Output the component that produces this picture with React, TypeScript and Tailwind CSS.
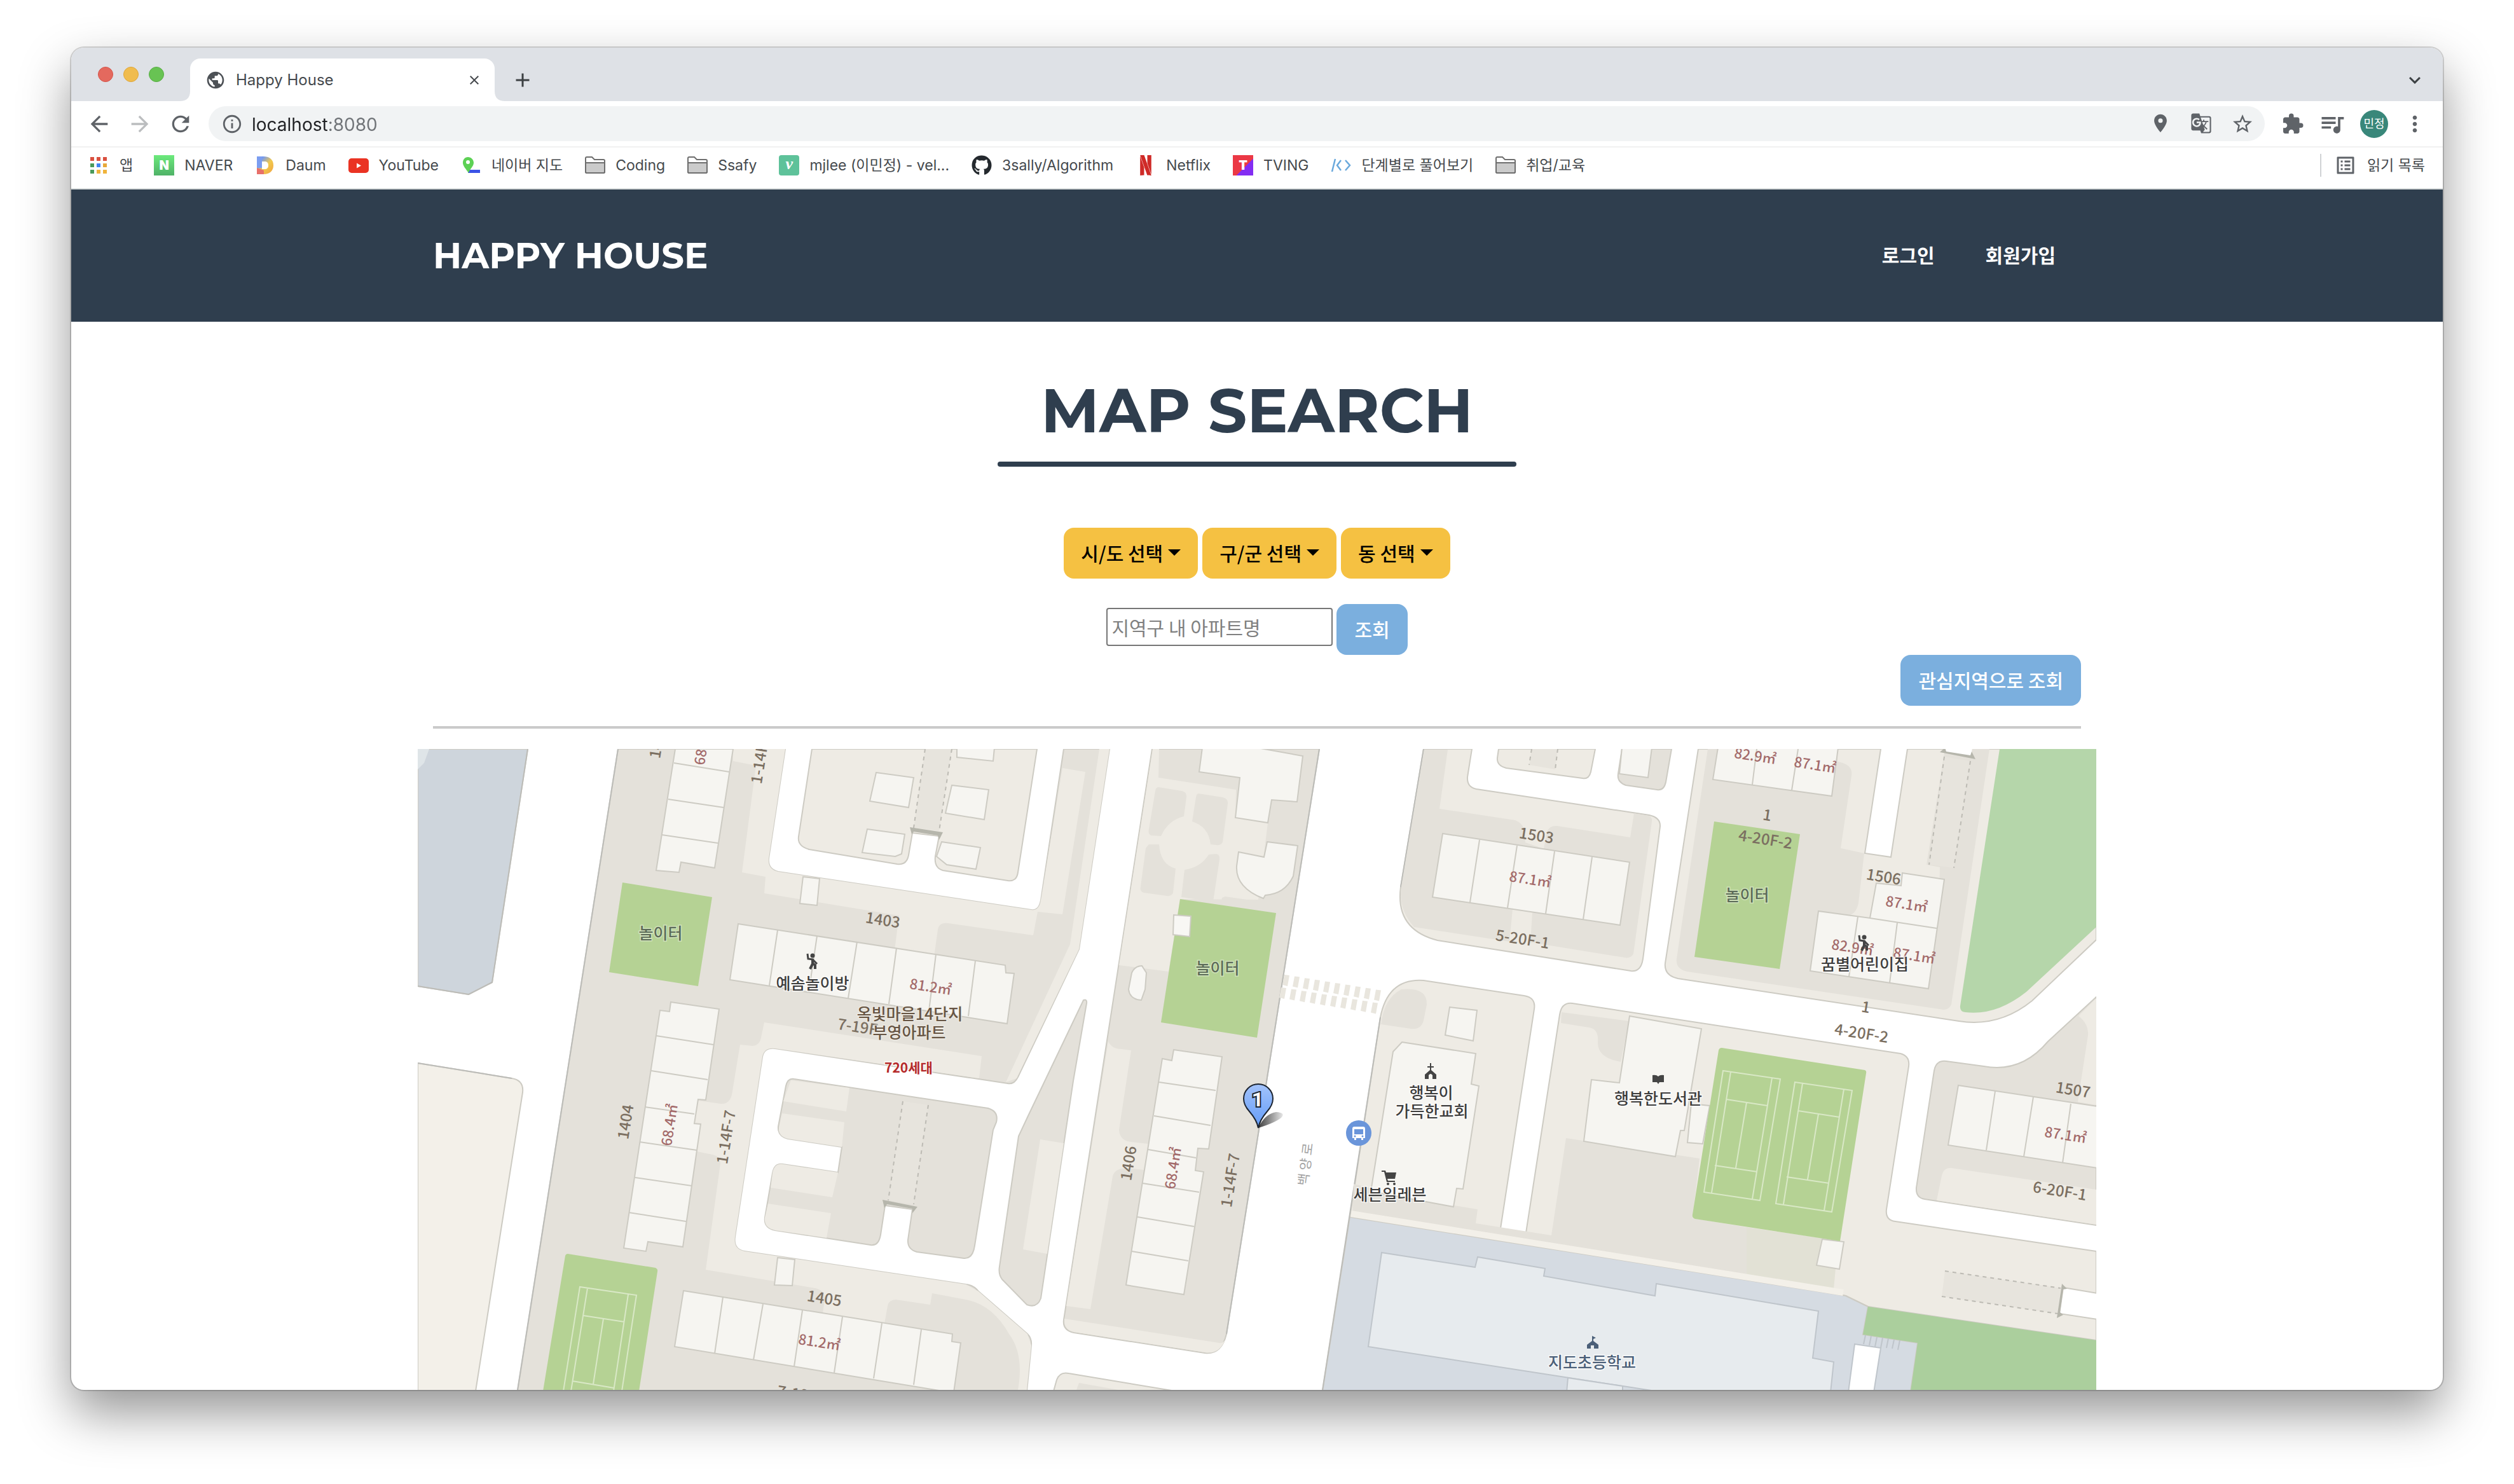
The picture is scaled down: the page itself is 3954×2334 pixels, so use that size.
import React from "react";
import {
  MdAdd,
  MdArrowBack,
  MdArrowForward,
  MdClose,
  MdExtension,
  MdGTranslate,
  MdInfoOutline,
  MdKeyboardArrowDown,
  MdListAlt,
  MdLocationOn,
  MdMoreVert,
  MdPublic,
  MdQueueMusic,
  MdRefresh,
  MdStarBorder,
} from "react-icons/md";
import { FaGithub } from "react-icons/fa";
import { SiNetflix } from "react-icons/si";

const UI = "font-['Inter','Noto_Sans_CJK_KR',sans-serif]";
const KR = "font-['Noto_Sans_CJK_KR',sans-serif]";
const BRAND = "font-['Montserrat','Inter','Noto_Sans_CJK_KR',sans-serif]";

/* ---------- bookmark icons ---------- */

function AppsIcon() {
  const colors = ["#d9503f", "#d9503f", "#d9503f", "#4a9a5b", "#4285f4", "#e8a93a", "#4a9a5b", "#f0b43c", "#f0b43c"];
  return (
    <svg viewBox="0 0 26 26" className="size-[26px]" aria-hidden="true">
      {colors.map((c, i) => (
        <rect key={i} x={(i % 3) * 10} y={Math.floor(i / 3) * 10} width="6" height="6" fill={c} />
      ))}
    </svg>
  );
}

function NaverIcon() {
  return (
    <span aria-hidden="true" className="flex size-8 items-center justify-center bg-linear-to-b from-[#6cea7c] to-[#4fb267] text-xl leading-none font-black text-white">
      N
    </span>
  );
}

function DaumIcon() {
  return (
    <svg viewBox="0 0 32 32" className="size-8" aria-hidden="true">
      <defs>
        <linearGradient id="daum" x1="0" y1="0" x2="1" y2="1">
          <stop offset="0.2" stopColor="#7399f2" />
          <stop offset="0.55" stopColor="#f2c94c" />
          <stop offset="1" stopColor="#f0a040" />
        </linearGradient>
      </defs>
      <path d="M3 2H13C24 2 29 8 29 16S24 30 13 30H3Z" fill="url(#daum)" />
      <path d="M3 20L14 24V30H3Z" fill="#e8706a" />
      <path d="M3 2H11V20H3Z" fill="#7b9df0" />
      <path d="M11 10H15C19 10 21 12 21 16S19 22 15 22H11Z" fill="#fff" />
    </svg>
  );
}

function YoutubeIcon() {
  return (
    <svg viewBox="0 0 32 32" className="size-8" aria-hidden="true">
      <rect y="5" width="32" height="23" rx="5" fill="#ea3323" />
      <path d="M13 12.5L20 16.5L13 20.5Z" fill="#fff" />
    </svg>
  );
}

function NaverMapIcon() {
  return (
    <svg viewBox="0 0 32 32" className="size-8" aria-hidden="true">
      <path d="M11 23H30V28H11Z" fill="#3b53e6" />
      <path d="M11 3C16 3 20 7 20 12C20 18 14 21 12 28C8 22 3 17 3 12C3 7 6 3 11 3Z" fill="#5dd155" />
      <circle cx="11" cy="11" r="3" fill="#fff" />
    </svg>
  );
}

function FolderIcon() {
  return (
    <svg viewBox="0 0 32 32" className="size-8" fill="#fff" stroke="#6e6e6e" strokeWidth="2" aria-hidden="true">
      <path d="M1 26V5Q1 3 3 3H11L15 7H29Q31 7 31 9V26Q31 28 29 28H3Q1 28 1 26Z" />
      <path d="M1 12H31V26Q31 28 29 28H3Q1 28 1 26Z" fill="#cbcbcb" />
    </svg>
  );
}

function VelogIcon() {
  return (
    <span aria-hidden="true" className="flex size-8 items-center justify-center rounded bg-[#5ec29a] pb-1 font-['Liberation_Serif',serif] text-[26px] leading-none font-bold text-white italic">
      v
    </span>
  );
}

function NetflixIcon() {
  return <SiNetflix className="size-8 text-[#cf2a27]" aria-hidden="true" />;
}

function TvingIcon() {
  return (
    <span aria-hidden="true" className="flex size-8 items-center justify-center bg-[linear-gradient(135deg,#eb3845_58%,#832df2_58%)] text-xl leading-none font-black text-white">
      T
    </span>
  );
}

function CodeIcon() {
  return (
    <svg viewBox="0 0 32 32" className="size-8" fill="none" stroke="#6aa9dc" strokeWidth="2.5" aria-hidden="true">
      <path d="M7 6L2 26M16 8L10 16L16 24M23 8L30 16L23 24" />
    </svg>
  );
}

const bookmarks: { label: string; icon: React.ReactNode }[] = [
  { label: "NAVER", icon: <NaverIcon /> },
  { label: "Daum", icon: <DaumIcon /> },
  { label: "YouTube", icon: <YoutubeIcon /> },
  { label: "네이버 지도", icon: <NaverMapIcon /> },
  { label: "Coding", icon: <FolderIcon /> },
  { label: "Ssafy", icon: <FolderIcon /> },
  { label: "mjlee (이민정) - vel...", icon: <VelogIcon /> },
  { label: "3sally/Algorithm", icon: <FaGithub className="size-8 text-[#24292e]" /> },
  { label: "Netflix", icon: <NetflixIcon /> },
  { label: "TVING", icon: <TvingIcon /> },
  { label: "단계별로 풀어보기", icon: <CodeIcon /> },
  { label: "취업/교육", icon: <FolderIcon /> },
];

/* ---------- browser chrome ---------- */

function TabStrip() {
  return (
    <div className="flex h-[84px] items-end bg-[#dee1e6]">
      <div className="flex gap-4 self-center pr-[41px] pl-[42px]">
        <button aria-label="창 닫기" className="size-6 rounded-full border border-[#d5544a] bg-[#e4695e]" />
        <button aria-label="최소화" className="size-6 rounded-full border border-[#dea63a] bg-[#f0bc4e]" />
        <button aria-label="전체 화면" className="size-6 rounded-full border border-[#57ad43] bg-[#68c353]" />
      </div>
      <div className="relative flex h-[67px] w-[479px] items-center rounded-t-2xl bg-white pr-5 pl-6 text-[#45494d]">
        <svg viewBox="0 0 16 16" className="absolute bottom-0 -left-4 size-4" aria-hidden="true">
          <path d="M16 0V16H0Q16 16 16 0Z" fill="#fff" />
        </svg>
        <svg viewBox="0 0 16 16" className="absolute -right-4 bottom-0 size-4" aria-hidden="true">
          <path d="M0 0V16H16Q0 16 0 0Z" fill="#fff" />
        </svg>
        <MdPublic className="size-8 text-[#4d5156]" />
        <span className="ml-4 flex-1 text-2xl">Happy House</span>
        <button aria-label="탭 닫기">
          <MdClose className="size-6" />
        </button>
      </div>
      <button aria-label="새 탭" className="ml-[26px] flex h-[67px] items-center text-[#3c4043]">
        <MdAdd className="size-9" />
      </button>
      <button aria-label="탭 검색" className="mr-[26px] ml-auto flex h-[67px] items-center text-[#3c4043]">
        <MdKeyboardArrowDown className="size-9" />
      </button>
    </div>
  );
}

function Toolbar() {
  return (
    <div className="flex h-[73px] items-center border-b-2 border-[#f1f1f1] bg-white pr-6 pl-6 text-[#5f6368]">
      <div className="flex gap-6 pr-6">
        <button aria-label="뒤로">
          <MdArrowBack className="size-10" />
        </button>
        <button aria-label="앞으로" className="text-[#bbbdbf]">
          <MdArrowForward className="size-10" />
        </button>
        <button aria-label="새로고침">
          <MdRefresh className="size-10" />
        </button>
      </div>
      <div className="flex h-[55px] flex-1 items-center rounded-full bg-[#f1f3f4] pr-[17px] pl-5">
        <MdInfoOutline className="size-[34px]" />
        <input
          aria-label="주소"
          defaultValue="localhost:8080"
          className="ml-[14px] flex-1 bg-[linear-gradient(90deg,#202124_121px,#6f7377_121px)] bg-clip-text pt-0.5 text-[28px] text-transparent outline-none"
        />
        <div className="flex gap-[30px]">
          <MdLocationOn className="size-[34px]" />
          <MdGTranslate className="size-[34px]" />
          <MdStarBorder className="size-9" />
        </div>
      </div>
      <div className="ml-[26px] flex items-center gap-[22px]">
        <MdExtension className="size-9" />
        <MdQueueMusic className="size-11" />
        <button aria-label="프로필" className="flex size-11 items-center justify-center rounded-full bg-[#39877a] text-lg text-white">
          민정
        </button>
        <MdMoreVert className="size-10" />
      </div>
    </div>
  );
}

function BookmarkBar() {
  return (
    <nav aria-label="북마크" className="flex h-[66px] items-center border-b-2 border-[#d8dcdc] bg-white pr-7 pb-2 pl-[30px] text-[23px] whitespace-nowrap text-[#45494d]">
      <a href="#apps" className="mr-[33px] flex items-center gap-5">
        <AppsIcon />
        앱
      </a>
      <div className="flex gap-[35px]">
        {bookmarks.map((b) => (
          <a key={b.label} href="#bookmark" className="flex items-center gap-4">
            {b.icon}
            {b.label}
          </a>
        ))}
      </div>
      <a href="#reading" className="ml-auto flex items-center gap-4 border-l-2 border-[#d0d2d5] pl-5 leading-8">
        <MdListAlt className="size-9 text-[#5f6368]" />
        읽기 목록
      </a>
    </nav>
  );
}

/* ---------- map ---------- */

const LIGHT = "#eeebe4";
const DARK = "#e4e1da";
const EDGE = "#cdcbc3";

const landBlocks: { d: string; fill: string }[] = [
  { d: "M658 1178H831L775 1545L738 1564L658 1551Z", fill: "#ced5dc" },
  { d: "M658 1672L806 1696Q825 1699 823 1718L749 2188H658Z", fill: "#f3f0e9" },
  {
    d: "M973 1178H1236L1210 1350Q1208 1367 1225 1371L1623 1431Q1635 1433 1638 1416L1674 1178H1746L1698 1493L1602 1694Q1596 1706 1586 1704L1220 1649Q1203 1647 1200 1662L1157 1945Q1154 1965 1172 1968L1520 2020Q1532 2021 1540 2031L1617 2098Q1624 2105 1623 2116L1616 2188H815Z",
    fill: DARK,
  },
  {
    d: "M1278 1178H1632L1602 1372Q1600 1387 1586 1385L1484 1369Q1470 1365 1472 1347L1478 1315L1436 1310L1430 1345Q1427 1361 1412 1359L1274 1336Q1255 1331 1257 1316Z",
    fill: LIGHT,
  },
  {
    d: "M1250 1697L1555 1743Q1572 1748 1568 1765L1563 1777L1534 1959Q1531 1980 1517 1979L1443 1969Q1428 1965 1429 1950L1436 1902L1393 1896L1386 1942Q1383 1960 1370 1958L1220 1935Q1202 1931 1204 1915L1216 1845Q1219 1829 1232 1831L1319 1844L1325 1804L1240 1791Q1224 1787 1225 1772L1237 1708Q1240 1695 1250 1697Z",
    fill: DARK,
  },
  { d: "M1705 1573Q1711 1571 1710 1578L1689 1700L1638 2042Q1632 2058 1616 2052L1577 2012Q1571 2004 1573 1992L1603 1787L1618 1755Z", fill: DARK },
  { d: "M1813 1178H2076L1930 2098Q1922 2131 1896 2128L1690 2096Q1672 2092 1674 2076Z", fill: DARK },
  { d: "M1658 2188L1663 2170Q1668 2157 1682 2160L1850 2188Z", fill: LIGHT },
  {
    d: "M2240 1178H2316L2309 1222Q2308 1238 2323 1241L2595 1282Q2613 1286 2612 1300L2585 1508Q2582 1529 2566 1527L2262 1479Q2195 1462 2204 1395Z",
    fill: LIGHT,
  },
  { d: "M2358 1178H2510L2503 1214Q2500 1226 2490 1224L2370 1208Q2355 1204 2356 1192Z", fill: LIGHT },
  { d: "M2552 1178H2630L2621 1230Q2618 1244 2607 1242L2558 1235Q2544 1230 2546 1217Z", fill: DARK },
  {
    d: "M2672 1178H2959L2934 1342L2975 1348L3001 1178H3298V1478L3197 1574Q3145 1616 3082 1606L2640 1539Q2618 1534 2620 1515Z",
    fill: LIGHT,
  },
  {
    d: "M2124 1914L2172 1600Q2184 1538 2240 1542L2398 1566Q2417 1569 2414 1587L2361 1932L2401 1939L2454 1596Q2457 1576 2474 1578L2990 1657Q3005 1661 3003 1677L2968 1902Q2966 1919 2982 1921L3298 1968V2108L2939 2055L2904 2038Z",
    fill: LIGHT,
  },
  { d: "M3298 1568L3222 1638Q3180 1688 3121 1677L3062 1669Q3046 1667 3043 1684L3015 1868Q3014 1884 3028 1886L3298 1927Z", fill: DARK },
  { d: "M2124 1914L2904 2038L2939 2055L2931 2099L3017 2112L3006 2188H2081Z", fill: "#d5dbe2" },
];

const lightPatches = [
  "M1153 1178H1236L1210 1350Q1208 1367 1225 1371L1623 1431Q1635 1433 1638 1416L1672 1208L1708 1214L1672 1438L1633 1434L1626 1471L1492 1452Q1478 1450 1476 1462L1470 1505L1408 1495L1415 1440L1203 1405L1205 1379L1168 1372L1190 1204L1154 1197Z",
  "M1730 1178H1746L1698 1493L1600 1696L1583 1702L1684 1485Z",
  "M1203 1608L1545 1661L1541 1696L1220 1649Q1203 1647 1200 1662L1157 1945Q1154 1965 1172 1968L1520 2020L1540 2031L1617 2098L1623 2116L1616 2186H1602Q1612 2130 1588 2098Q1562 2052 1520 2044L1467 2034L1464 2052L1410 2044Q1399 2044 1397 2054L1392 2082L1295 2066L1298 2044Q1300 2030 1283 2026L1111 1997L1134 1830Q1133 1818 1122 1816L1097 1811L1103 1768L1093 1767L1099 1731L1135 1736Q1148 1737 1152 1722L1165 1643L1185 1645Q1196 1644 1198 1632Z",
  "M1245 1699L1337 1711L1332 1748L1233 1732Z",
  "M1231 1751L1329 1765L1325 1804L1240 1791Q1225 1787 1226 1775Z",
  "M1213 1868L1310 1883L1319 1844L1232 1831Q1219 1829 1216 1845Z",
  "M1209 1893L1308 1908L1301 1947L1220 1935Q1202 1931 1204 1915Z",
  "M1637 1792L1674 1798L1648 1972L1610 1965Z",
  "M1814 1178H1824L1823 1223L1945 1242L1944 1286L1995 1294L1980 1415L1857 1414L1839 1528L1761 1518Z",
  "M1744 1638Q1750 1650 1765 1650L1780 1652L1761 1777Q1762 1794 1780 1796L1807 1799L1800 1840L1775 1837Q1754 1837 1751 1850L1716 2059L1678 2054Z",
  "M1675 2074L1918 2112Q1926 2114 1929 2104Q1920 2131 1896 2127L1690 2095Q1674 2092 1675 2074Z",
  "M3055 1849Q3058 1836 3070 1837L3298 1871V1926L3047 1888Z",
  "M3298 1570L3270 1598Q3286 1610 3285 1628L3269 1733L3298 1738Z",
];

const darkPatches = [
  "M2241 1179H2278L2265 1272L2384 1290Q2402 1296 2400 1325L2429 1335L2434 1308Q2438 1298 2450 1299L2565 1317L2571 1279L2594 1283Q2600 1285 2599 1292L2570 1500Q2566 1508 2556 1506L2408 1482L2411 1435L2380 1430L2375 1481L2225 1458Q2200 1430 2205 1395Z",
  "M2687 1178H2891V1198Q2916 1202 2913 1220L2896 1334L2933 1342L2924 1420Q2920 1440 2905 1440L2950 1450L3050 1440L3052 1364L3031 1360L3060 1178H3130L3070 1580Q3066 1588 3058 1588L2654 1528Q2636 1524 2638 1508Z",
  "M2205 1556Q2246 1552 2245 1580L2240 1605Q2236 1620 2220 1618L2173 1611Q2178 1570 2205 1556Z",
  "M2130 1862L2229 1886L2325 1902L2322 1924L2441 1943L2464 1790L2674 1822L2663 1916L2748 1930V2008L2128 1908Z",
  "M2457 1592L2563 1606L2550 1670Q2514 1664 2514 1640Q2516 1618 2500 1616L2456 1609Z",
  "M1823 1238L1860 1244Q1868 1246 1867 1254L1863 1284Q1838 1290 1827 1315L1812 1314Q1806 1312 1808 1304L1818 1244Q1819 1238 1823 1238Z",
  "M1886 1248L1924 1254Q1933 1256 1932 1264L1924 1324Q1922 1330 1914 1329L1905 1328Q1902 1300 1876 1292L1882 1254Q1883 1248 1886 1248Z",
  "M1808 1328H1824Q1826 1360 1850 1366L1846 1404Q1844 1410 1836 1409L1800 1404Q1793 1402 1795 1394L1803 1334Z",
  "M1902 1344L1914 1343Q1920 1344 1919 1352L1909 1418L1859 1411L1864 1368Q1890 1364 1902 1344Z",
  "M1923 1412L1928 1410L1976 1417L1990 1414L2036 1390L2010 1440L1920 1424Z",
];

const buildings = [
  "M1063 1178H1154L1125 1365L1072 1356L1069 1372L1033 1369Z",
  "M1264 1379L1290 1382L1286 1424L1259 1421Z",
  "M1162 1453L1582 1518L1583 1530L1596 1531L1585 1610L1149 1541Z",
  "M1056 1576L1132 1587L1111 1730L1099 1729L1093 1767L1103 1768L1075 1961L1020 1953L1017 1968L982 1963L1039 1589L1054 1591Z",
  "M1224 1978L1251 1981L1247 2022L1219 2021Z",
  "M1076 2030L1499 2098L1498 2110L1512 2112L1501 2190L1484 2188L1062 2118Z",
  "M1379 1215L1438 1223L1430 1270L1369 1260Z",
  "M1365 1304L1424 1312L1419 1343L1409 1347L1357 1341Z",
  "M1498 1235L1556 1242L1549 1289L1488 1279Z",
  "M1482 1324L1543 1333L1536 1367L1490 1360L1474 1347Z",
  "M1506 1176H1565L1563 1197L1506 1191Z",
  "M1892 1176H1978L2050 1189L2041 1261L2001 1258L1995 1294L1944 1286L1951 1223L1887 1214Z",
  "M1994 1324L2042 1330L2035 1378Q2022 1406 1991 1408L1988 1413Q1944 1396 1946 1362L1949 1340L1989 1348Z",
  "M1847 1651L1923 1662L1902 1807L1885 1806L1881 1841L1894 1843L1863 2036L1772 2021L1829 1665L1844 1668Z",
  "M2270 1311L2564 1356L2549 1455L2254 1411Z",
  "M2552 1176H2599L2593 1223L2548 1217Z",
  "M2703 1176H2892L2882 1252L2695 1226Z",
  "M2993 1373L3059 1383L3034 1555L2848 1527L2861 1433L2942 1444L2952 1389L2991 1393Z",
  "M2281 1584L2324 1589L2318 1637L2274 1628Z",
  "M2206 1639L2322 1657L2315 1705L2327 1708L2302 1870L2292 1869L2287 1898L2157 1874L2192 1654Z",
  "M2564 1598L2677 1618L2650 1778H2644L2636 1819L2492 1795L2504 1698L2548 1703Z",
  "M2661 1736L2690 1739L2679 1799L2655 1797Z",
  "M2867 1949L2901 1953L2894 1996L2858 1990Z",
  "M3081 1707L3300 1740V1837L3065 1801Z",
];

const unitLines =
  "M1061 1200L1148 1214M1052 1257L1139 1270M1042 1313L1130 1326" +
  "M1224 1463L1211 1550M1286 1472L1273 1560M1349 1481L1335 1570M1411 1491L1399 1579M1473 1501L1462 1590M1535 1511L1524 1598" +
  "M1033 1629L1123 1643M1025 1684L1114 1698M1016 1741L1093 1752M1007 1796L1097 1809M1000 1852L1089 1865M990 1907L1080 1921" +
  "M1138 2040L1125 2129M1201 2051L1186 2139M1263 2061L1250 2149M1326 2071L1313 2159M1388 2081L1375 2168M1450 2091L1438 2178" +
  "M1824 1702L1913 1715M1816 1755L1905 1770M1807 1808L1882 1821M1798 1861L1887 1875M1790 1914L1879 1929M1781 1968L1870 1983" +
  "M2328 1321L2313 1419M2387 1330L2372 1428M2446 1339L2432 1437M2505 1348L2491 1446" +
  "M2764 1178L2757 1234M2829 1178L2819 1243M2923 1442L2909 1536M2985 1451L2973 1546M2942 1444L3047 1460" +
  "M3139 1716L3125 1809M3199 1725L3184 1819M3258 1736L3245 1829";

const greens: { d: string; fill: string }[] = [
  { d: "M980 1388L1121 1411L1099 1551L959 1529Z", fill: "#b5d294" },
  { d: "M894 1972L1032 1994Q1036 1996 1035 2000L1006 2188H855L890 1975Q891 1972 894 1972Z", fill: "#b5d294" },
  { d: "M1857 1414L2008 1436L1978 1632L1827 1608Z", fill: "#b5d294" },
  { d: "M2697 1292L2832 1312L2800 1524L2666 1505Z", fill: "#b5d294" },
  { d: "M2709 1648L2934 1683Q2937 1684 2936 1688L2895 1952L2667 1917Q2662 1916 2663 1910L2704 1652Q2705 1648 2709 1648Z", fill: "#b5d294" },
  { d: "M3146 1178H3298V1458L3188 1560Q3140 1598 3092 1592Q3083 1591 3084 1582Z", fill: "#b5d6aa" },
  { d: "M2939 2055L3298 2108V2188H3006L3017 2112L2931 2099Z", fill: "#abcf9d" },
];

const court =
  "M2711 1684L2801 1697L2769 1888L2681 1875ZM2723 1686L2693 1876M2788 1695L2757 1886M2716 1729L2781 1739M2748 1734L2731 1837M2698 1833L2765 1843";

type Label = { x: number; y: number; t: string; kind: keyof typeof labelStyles; r?: number };

const labelStyles = {
  block: "fill-[#7b6f61] text-[24px] font-medium",
  area: "fill-[#a36a6a] text-[22px] font-medium",
  park: "fill-[#5c6b58] stroke-[#dce9cc] text-[25px] font-medium",
  place: "fill-[#3d3d3d] stroke-white text-[25px] font-medium",
  estate: "fill-[#665443] stroke-[#f0ede7] text-[25px] font-medium",
  count: "fill-[#b52a2a] stroke-white text-[21px] font-bold",
  school: "fill-[#4b5f78] stroke-white text-[25px] font-medium",
  road: "fill-[#a3a3a3] text-[21px]",
};

const labels: Label[] = [
  { x: 1033, y: 1165, t: "1402", kind: "block", r: -81 },
  { x: 1104, y: 1170, t: "68.4㎡", kind: "area", r: -81 },
  { x: 1195, y: 1190, t: "1-14F-7", kind: "block", r: -81 },
  { x: 1040, y: 1466, t: "놀이터", kind: "park" },
  { x: 1390, y: 1445, t: "1403", kind: "block", r: 9 },
  { x: 1465, y: 1550, t: "81.2㎡", kind: "area", r: 9 },
  { x: 1279, y: 1545, t: "예솜놀이방", kind: "place" },
  { x: 1350, y: 1613, t: "7-19F", kind: "block", r: 9 },
  { x: 1432, y: 1593, t: "옥빛마을14단지", kind: "estate" },
  { x: 1431, y: 1622, t: "부영아파트", kind: "estate" },
  { x: 1430, y: 1678, t: "720세대", kind: "count" },
  { x: 983, y: 1764, t: "1404", kind: "block", r: -81 },
  { x: 1052, y: 1769, t: "68.4㎡", kind: "area", r: -81 },
  { x: 1141, y: 1788, t: "1-14F-7", kind: "block", r: -81 },
  { x: 1298, y: 2040, t: "1405", kind: "block", r: 9 },
  { x: 1290, y: 2109, t: "81.2㎡", kind: "area", r: 9 },
  { x: 1266, y: 2192, t: "7-19F-1", kind: "block", r: 9 },
  { x: 1916, y: 1521, t: "놀이터", kind: "park" },
  { x: 1774, y: 1829, t: "1406", kind: "block", r: -81 },
  { x: 1844, y: 1837, t: "68.4㎡", kind: "area", r: -81 },
  { x: 1934, y: 1856, t: "1-14F-7", kind: "block", r: -81 },
  { x: 2053, y: 1831, t: "백 양 로", kind: "road", r: -83 },
  { x: 2252, y: 1717, t: "행복이", kind: "place" },
  { x: 2253, y: 1746, t: "가득한교회", kind: "place" },
  { x: 2187, y: 1877, t: "세븐일레븐", kind: "place" },
  { x: 2418, y: 1312, t: "1503", kind: "block", r: 9 },
  { x: 2408, y: 1381, t: "87.1㎡", kind: "area", r: 9 },
  { x: 2396, y: 1475, t: "5-20F-1", kind: "block", r: 9 },
  { x: 2762, y: 1187, t: "82.9㎡", kind: "area", r: 9 },
  { x: 2856, y: 1201, t: "87.1㎡", kind: "area", r: 9 },
  { x: 2781, y: 1280, t: "1", kind: "block", r: 9 },
  { x: 2778, y: 1318, t: "4-20F-2", kind: "block", r: 9 },
  { x: 2749, y: 1406, t: "놀이터", kind: "park" },
  { x: 2964, y: 1377, t: "1506", kind: "block", r: 9 },
  { x: 3000, y: 1420, t: "87.1㎡", kind: "area", r: 9 },
  { x: 2915, y: 1488, t: "82.9㎡", kind: "area", r: 9 },
  { x: 3012, y: 1501, t: "87.1㎡", kind: "area", r: 9 },
  { x: 2934, y: 1515, t: "꿈별어린이집", kind: "place" },
  { x: 2936, y: 1582, t: "1", kind: "block", r: 9 },
  { x: 2929, y: 1623, t: "4-20F-2", kind: "block", r: 9 },
  { x: 2609, y: 1726, t: "행복한도서관", kind: "place" },
  { x: 3262, y: 1712, t: "1507", kind: "block", r: 9 },
  { x: 3250, y: 1783, t: "87.1㎡", kind: "area", r: 9 },
  { x: 3241, y: 1871, t: "6-20F-1", kind: "block", r: 9 },
  { x: 2505, y: 2141, t: "지도초등학교", kind: "school" },
];

function Child({ x, y }: { x: number; y: number }) {
  return (
    <g transform={`translate(${x} ${y})`} fill="none" stroke="#444" strokeWidth="3">
      <circle cx="1" cy="-9" r="3.5" fill="#444" stroke="none" />
      <path d="M-7 -12L-6 -4L1 -3L8 4" />
      <path d="M1 -4V4L-3 12M1 3L5 6V12" strokeWidth="4" />
    </g>
  );
}

function MapCanvas() {
  return (
    <svg
      viewBox="658 1178 2640 1008"
      preserveAspectRatio="xMidYMin slice"
      role="img"
      aria-label="지도"
      className={`block h-full w-full ${KR}`}
    >
      <defs>
        <linearGradient id="pin" x1="0" y1="0" x2="0" y2="1">
          <stop offset="0" stopColor="#a3c3fb" />
          <stop offset="1" stopColor="#629bf7" />
        </linearGradient>
        <linearGradient id="pinShadow" x1="0" y1="0" x2="1" y2="0">
          <stop offset="0" stopColor="#000" stopOpacity="0.75" />
          <stop offset="1" stopColor="#000" stopOpacity="0.1" />
        </linearGradient>
      </defs>
      <rect x="658" y="1178" width="2640" height="1008" fill="#fff" />

      <g stroke={EDGE} strokeWidth="2">
        {landBlocks.map((b) => (
          <path key={b.d} d={b.d} fill={b.fill} />
        ))}
      </g>
      <path d="M658 1178H676L668 1200L658 1210Z" fill="#dfe5e8" />
      <path d="M831 1178L775 1545L738 1564L658 1551M658 1672L806 1696M973 1178L815 2186M2076 1178L1930 2098M2172 1600L2081 2186M2240 1178L2204 1395" fill="none" stroke="#bcbcb8" strokeWidth="2" />
      {lightPatches.map((d) => (
        <path key={d} d={d} fill={LIGHT} />
      ))}
      {darkPatches.map((d) => (
        <path key={d} d={d} fill={DARK} />
      ))}
      <circle cx="1863" cy="1328" r="37" fill={LIGHT} />
      <path d="M2748 1930L2892 1951L2885 2028L2748 2006Z" fill="#e2e1d5" />
      <path d="M2126 1909L2900 2033" stroke="#f3f0e9" strokeWidth="10" />
      <path d="M1698 2175L1760 2186H1694Z" fill={DARK} />

      {/* underpasses */}
      <path d="M1456 1178H1498L1478 1307L1438 1302ZM1421 1732L1461 1738L1438 1894L1398 1888ZM2410 1178H2451L2447 1210L2406 1203ZM3059 1190L3100 1197L3074 1365L3035 1360ZM3060 1999L3242 2026L3237 2066L3055 2039Z" fill="#e7e4dd" />
      <path d="M1456 1178L1438 1302M1498 1178L1478 1307M1421 1732L1398 1888M1461 1738L1438 1894M2410 1178L2406 1203M2451 1178L2447 1210M3059 1190L3035 1360M3100 1197L3074 1365M3060 1999L3242 2026M3055 2039L3237 2066" fill="none" stroke="#bdbbb4" strokeWidth="2" strokeDasharray="6 6" />
      <path d="M3300 2034L3246 2025L3240 2066L3300 2075" fill="#fff" stroke={EDGE} strokeWidth="2" />
      <path d="M3062 1176H3103L3101 1190L3060 1184Z" fill="#fff" />
      <path d="M1432 1301L1484 1309L1478 1321L1476 1314L1438 1308L1435 1312ZM1389 1887L1444 1898L1436 1908V1901L1396 1894L1392 1900ZM3052 1183L3060 1176L3062 1182L3100 1188L3102 1182L3108 1194ZM3244 2019L3252 2027L3246 2028L3241 2064L3246 2068L3236 2073Z" fill="#b6b6ac" />

      <g fill="#f6f5f1" stroke={EDGE} strokeWidth="2">
        {buildings.map((d) => (
          <path key={d} d={d} />
        ))}
        <path d={unitLines} fill="none" />
      </g>

      {greens.map((g) => (
        <path key={g.d} d={g.d} fill={g.fill} />
      ))}
      <g fill="none" stroke="#d9e8c6" strokeWidth="2">
        <path d={court} />
        <path d={court} transform="translate(113 18)" />
        <path d="M887 2188L913 2024L1002 2037L979 2188M925 2026L899 2188M989 2036L966 2188M918 2069L983 2079M950 2074L934 2177M901 2172L967 2183" />
      </g>
      <g fill="#f8f7f4" stroke={EDGE} strokeWidth="2">
        <path d="M1847 1439L1874 1441L1872 1473L1846 1470Z" />
        <path d="M1781 1530Q1786 1519 1797 1519L1804 1530L1802 1556L1796 1573Q1778 1572 1776 1556Z" />
      </g>

      {/* school grounds */}
      <g stroke="#bfc5cb" strokeWidth="2" fill="#e7ebee">
        <path d="M2174 1970L2321 1993L2325 1977L2431 1995L2429 2007L2604 2038L2606 2019L2861 2062L2852 2136L2885 2142L2880 2190H2618L2153 2118Z" />
        <path d="M2467 2167L2553 2180V2190H2465Z" />
        <path d="M2935 2100L2932 2114M2944 2101L2941 2116M2953 2103L2950 2118M2962 2104L2959 2120M2971 2105L2968 2120M2980 2107L2977 2121M2989 2108L2986 2123" />
        <path d="M2918 2114L2959 2120L2948 2190H2908Z" fill="#fff" />
      </g>

      {/* crosswalk */}
      <g fill="#e9e6de">
        {Array.from({ length: 10 }, (_, i) => (
          <g key={i} transform={`translate(${i * 16} ${i * 2.6})`}>
            <path d="M2021 1533L2029 1534L2026 1551L2018 1549Z" />
            <path d="M2016 1553L2024 1554L2021 1571L2013 1569Z" />
          </g>
        ))}
      </g>

      {labels.map((l, i) => (
        <text
          key={i}
          x={l.x}
          y={l.y}
          textAnchor="middle"
          dominantBaseline="central"
          transform={l.r ? `rotate(${l.r} ${l.x} ${l.y})` : undefined}
          strokeWidth={3}
          strokeOpacity={0.7}
          paintOrder="stroke"
          className={labelStyles[l.kind]}
        >
          {l.t}
        </text>
      ))}

      {/* points of interest */}
      <Child x={1278} y={1512} />
      <Child x={2932} y={1483} />
      <path d="M2250 1672H2252V1677H2256V1679H2252V1683L2260 1690V1697H2254V1691Q2251 1687 2248 1691V1697H2242V1690L2250 1683V1679H2246V1677H2250Z" fill="#444" />
      <path d="M2174 1841H2180L2181 1844H2197L2195 1854H2183L2184 1857H2195V1859H2182L2178 1843H2174Z" fill="#444" />
      <circle cx="2184" cy="1862" r="2" fill="#444" />
      <circle cx="2194" cy="1862" r="2" fill="#444" />
      <path d="M2600 1691Q2606 1690 2609 1693Q2612 1690 2618 1691V1702H2611L2609 1705L2607 1702H2600Z" fill="#444" />
      <path d="M2505 2101L2511 2104L2507 2106V2109L2515 2115V2121H2508V2116H2503V2121H2497V2115L2505 2109Z" fill="#4b5f78" />

      <circle cx="2138" cy="1782" r="20" fill="#6a95da" />
      <path d="M2131 1772H2145Q2148 1772 2148 1775V1790H2145V1793H2142V1790H2134V1793H2131V1790H2128V1775Q2128 1772 2131 1772ZM2131 1776V1784H2145V1776Z" fill="#fff" fillRule="evenodd" />
      <g fill="#6a95da">
        <circle cx="2132" cy="1787" r="1.5" />
        <circle cx="2144" cy="1787" r="1.5" />
      </g>

      <path d="M1980 1774Q1990 1752 2008 1749Q2024 1750 2016 1758Q2006 1766 1980 1774Z" fill="url(#pinShadow)" />
      <path d="M1980 1774Q1978 1762 1966 1748Q1957 1738 1957 1728A23 23 0 0 1 2003 1728Q2003 1738 1994 1748Q1982 1762 1980 1774Z" fill="url(#pin)" stroke="#1c2430" strokeWidth="2" />
      <text x="1979" y="1729" textAnchor="middle" dominantBaseline="central" strokeWidth={4} paintOrder="stroke" className="fill-white stroke-[#1c2430] font-['Roboto',sans-serif] text-[32px] font-bold">
        1
      </text>
    </svg>
  );
}

/* ---------- page ---------- */

function SiteHeader() {
  return (
    <header className="bg-[#2f3e4e] text-white">
      <div className="mx-auto flex h-[208px] max-w-[2640px] items-center justify-between px-6">
        <a href="#home" className={`text-[56px] font-bold ${BRAND}`}>
          HAPPY HOUSE
        </a>
        <nav className={`mr-10 flex gap-20 pb-1 text-[30px] font-bold ${KR}`}>
          <a href="#login">로그인</a>
          <a href="#join">회원가입</a>
        </nav>
      </div>
    </header>
  );
}

function DropdownButton({ children }: { children: React.ReactNode }) {
  return (
    <button aria-haspopup="menu" className="flex h-20 items-center gap-2 rounded-2xl bg-[#f5c142] px-[27px] pb-0.5 font-medium text-black">
      {children}
      <span aria-hidden="true" className="border-x-[10px] border-t-[10px] border-x-transparent border-t-black" />
    </button>
  );
}

function SearchPanel() {
  return (
    <section className={`mx-auto w-full max-w-[2640px] px-6 text-[30px] ${KR}`}>
      <h1 className={`pt-20 text-center text-[96px] leading-[120px] font-bold text-[#2f3e4e] ${BRAND}`}>MAP SEARCH</h1>
      <div className="mx-auto mt-5 h-2 w-[816px] rounded-full bg-[#2f3e4e]" />
      <div className="mt-[96px] flex justify-center gap-[7px]">
        <DropdownButton>시/도 선택</DropdownButton>
        <DropdownButton>구/군 선택</DropdownButton>
        <DropdownButton>동 선택</DropdownButton>
      </div>
      <form className="mt-10 flex justify-center gap-[6px]" onSubmit={(e) => e.preventDefault()}>
        <input
          aria-label="지역구 내 아파트명"
          placeholder="지역구 내 아파트명"
          className="mt-1.5 h-[60px] w-[356px] rounded border-2 border-[#767676] bg-white px-1.5 leading-10 placeholder:text-[#808080]"
        />
        <button className="h-20 rounded-2xl bg-[#7bafde] px-7 pb-0.5 font-medium text-white">조회</button>
      </form>
      <div className="flex justify-end">
        <button className="h-20 rounded-2xl bg-[#7bafde] px-7 pb-0.5 font-medium text-white">관심지역으로 조회</button>
      </div>
      <hr className="mt-8 border-t-4 border-[#cacaca]" />
    </section>
  );
}

export default function App() {
  return (
    <div className={`flex h-screen flex-col bg-white px-28 pt-[75px] pb-[148px] ${UI}`}>
      <div className="flex min-h-0 flex-1 flex-col overflow-hidden rounded-[20px] bg-white shadow-[0_0_0_2px_rgba(0,0,0,0.16),0_36px_80px_rgba(0,0,0,0.42)]">
        <TabStrip />
        <Toolbar />
        <BookmarkBar />
        <SiteHeader />
        <main className="flex min-h-0 flex-1 flex-col">
          <SearchPanel />
          <div className="mx-auto mt-8 min-h-0 w-full max-w-[2640px] flex-1 overflow-hidden">
            <MapCanvas />
          </div>
        </main>
      </div>
    </div>
  );
}
